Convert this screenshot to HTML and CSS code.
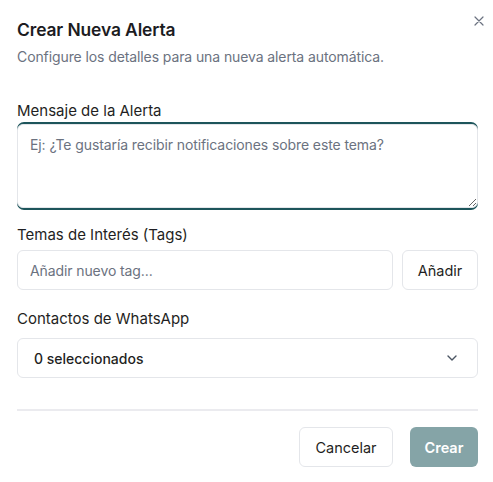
FILE: index.html
```html
<!DOCTYPE html>
<html lang="es">
<head>
<meta charset="utf-8">
<link rel="stylesheet" href="styles.css">
</head>
<body>
<div class="dialog">
  <button class="close" aria-label="Cerrar">
    <svg width="10" height="10" viewBox="0 0 10 10"><path d="M1 1L9 9M9 1L1 9" stroke="#6b7280" stroke-width="1.2" stroke-linecap="round" fill="none"/></svg>
  </button>
  <header class="head">
    <h2 class="title">Crear Nueva Alerta</h2>
    <p class="subtitle">Configure los detalles para una nueva alerta automática.</p>
  </header>

  <div class="field first">
    <label class="label">Mensaje de la Alerta</label>
    <div class="focus-ring">
      <textarea class="textarea" placeholder="Ej: ¿Te gustaría recibir notificaciones sobre este tema?"></textarea>
    </div>
  </div>

  <div class="field">
    <label class="label">Temas de Interés (Tags)</label>
    <div class="row">
      <input class="input" placeholder="Añadir nuevo tag...">
      <button class="btn btn-outline add">Añadir</button>
    </div>
  </div>

  <div class="field contacts">
    <label class="label">Contactos de WhatsApp</label>
    <div class="select">
      <span>0 seleccionados</span>
      <svg width="10" height="6" viewBox="0 0 10 6"><path d="M1 1L5 5L9 1" stroke="#4b5563" stroke-width="1.4" stroke-linecap="round" stroke-linejoin="round" fill="none"/></svg>
    </div>
  </div>

  <hr class="divider">

  <div class="footer">
    <button class="btn btn-outline cancel">Cancelar</button>
    <button class="btn btn-primary">Crear</button>
  </div>
</div>
</body>
</html>
```
FILE: styles.css
```css
* { box-sizing: border-box; }
html, body { margin: 0; background: #ffffff; }
body {
  font-family: Inter, "Noto Sans", sans-serif;
  color: #18181b;
}
.dialog {
  position: relative;
  padding: 18px 15px 0 17px;
}
.close {
  position: absolute;
  top: 15px;
  right: 8px;
  border: 0;
  background: none;
  padding: 0;
  width: 12px;
  height: 12px;
  display: flex;
  align-items: center;
  justify-content: center;
}
.head { display: flex; flex-direction: column; gap: 5px; }
.title {
  margin: 0;
  font-size: 17.4px;
  line-height: 24px;
  font-weight: 600;
  color: #1c1c1f;
  letter-spacing: -0.1px;
}
.subtitle {
  margin: 0;
  font-size: 14px;
  line-height: 20px;
  color: #6b7280;
  letter-spacing: -0.1px;
}
.field { display: flex; flex-direction: column; }
.field.first { margin-top: 34px; gap: 1px; }
.field:not(.first) { margin-top: 15px; gap: 5px; }
.field.contacts { margin-top: 19px; gap: 9px; }
.label {
  font-size: 15px;
  line-height: 20px;
  font-weight: 400;
  color: #1f1f23;
}
.focus-ring {
  background: #1d555b;
  border-radius: 7px;
  padding: 2px 0;
  display: flex;
}
.textarea {
  width: 100%;
  height: 84px;
  border: 1px solid #e4e6ea;
  border-radius: 6px;
  padding: 10px 12px;
  font-family: inherit;
  font-size: 14px;
  line-height: 20px;
  letter-spacing: -0.1px;
  color: #18181b;
  resize: vertical;
  outline: none;
  display: block;
}
.textarea::placeholder, .input::placeholder { color: #6b7280; }
.row { display: flex; gap: 9px; }
.input {
  flex: 1;
  height: 40px;
  border: 1px solid #e4e6ea;
  border-radius: 6px;
  padding: 0 12px;
  font-family: inherit;
  font-size: 14px;
  letter-spacing: -0.1px;
  color: #18181b;
  outline: none;
}
.btn {
  height: 40px;
  border-radius: 6px;
  font-family: inherit;
  font-size: 14.5px;
  font-weight: 400;
  padding: 0 16px;
}
.btn-outline {
  background: #fff;
  border: 1px solid #e4e6ea;
  color: #1f1f23;
}
.add { width: 76px; padding: 0; }
.select {
  height: 40px;
  border: 1px solid #e4e6ea;
  border-radius: 6px;
  padding: 0 20px 0 16px;
  display: flex;
  align-items: center;
  justify-content: space-between;
  font-size: 14px;
  font-weight: 500;
  color: #1f1f23;
}
.divider {
  margin: 31px 0 0;
  border: 0;
  border-top: 2px solid #ebebef;
}
.footer {
  display: flex;
  justify-content: flex-end;
  gap: 17px;
  margin-top: 16px;
}
.cancel { width: 94px; padding: 0; }
.btn-primary {
  width: 68px;
  padding: 0;
  border: 0;
  background: #85a4a7;
  color: #ffffff;
  font-weight: 600;
}
```
